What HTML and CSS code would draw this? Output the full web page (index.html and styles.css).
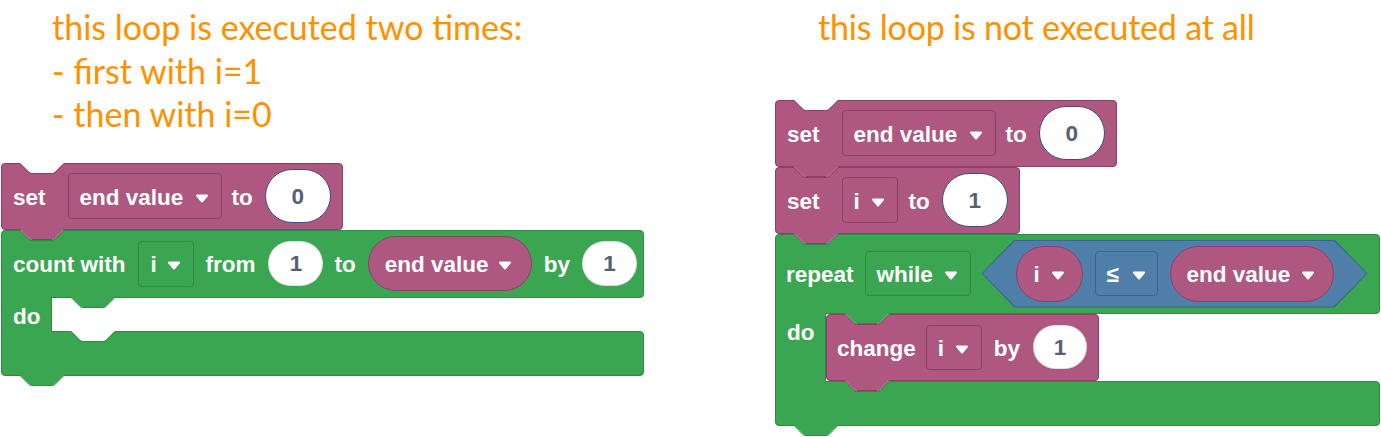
FILE: index.html
```html
<!DOCTYPE html>
<html lang="en">
<head>
<meta charset="utf-8">
<title>Blockly loops</title>
<link rel="stylesheet" href="styles.css">
</head>
<body>
<div class="page">
  <section class="col col-left">
    <p class="note">this loop is executed two times:<br>- first with i=1<br>- then with i=0</p>
    <div class="stack">
      <div class="block purple simple">
        <svg class="notch" viewBox="0 0 44 11"><path class="f" d="M0 0 L9 9 Q10 10 11.5 10 L32.5 10 Q34 10 35 9 L44 0 Z"/><path class="s" d="M0 0.5 L9 9.5 Q10 10.5 11.5 10.5 L32.5 10.5 Q34 10.5 35 9.5 L44 0.5"/></svg>
        <span class="lbl">set</span>
        <span class="dd dd-var ml-22">end value<svg class="arrow" viewBox="0 0 14 9"><path d="M2 1.5 H12 L7 7.5 Z"/></svg></span>
        <span class="lbl ml-10">to</span>
        <span class="num num-lg ml-12">0</span>
        <svg class="tab" viewBox="0 0 44 11"><path class="f" d="M0 0 L9 9 Q10 10 11.5 10 L32.5 10 Q34 10 35 9 L44 0 Z"/><path class="s" d="M0 0.5 L9 9.5 Q10 10.5 11.5 10.5 L32.5 10.5 Q34 10.5 35 9.5 L44 0.5"/></svg>
      </div>

      <div class="cblock green cblock-left">
        <div class="block c-top row-count">
          <svg class="notch" viewBox="0 0 44 11"><path class="f" d="M0 0 L9 9 Q10 10 11.5 10 L32.5 10 Q34 10 35 9 L44 0 Z"/><path class="s" d="M0 0.5 L9 9.5 Q10 10.5 11.5 10.5 L32.5 10.5 Q34 10.5 35 9.5 L44 0.5"/></svg>
          <span class="lbl">count with</span>
          <span class="dd dd-i ml-13">i<svg class="arrow" viewBox="0 0 14 9"><path d="M2 1.5 H12 L7 7.5 Z"/></svg></span>
          <span class="lbl ml-11">from</span>
          <span class="num num-sm ml-13">1</span>
          <span class="lbl ml-11">to</span>
          <span class="pill purple pill-var ml-12">end value<svg class="arrow" viewBox="0 0 14 9"><path d="M2 1.5 H12 L7 7.5 Z"/></svg></span>
          <span class="lbl ml-12">by</span>
          <span class="num num-sm ml-12">1</span>
          <svg class="tab tab-slot" viewBox="0 0 44 11"><path class="f" d="M0 0 L9 9 Q10 10 11.5 10 L32.5 10 Q34 10 35 9 L44 0 Z"/><path class="s" d="M0 0.5 L9 9.5 Q10 10.5 11.5 10.5 L32.5 10.5 Q34 10.5 35 9.5 L44 0.5"/></svg>
        </div>
        <div class="c-mid">
          <div class="spine"><span class="lbl">do</span></div>
          <div class="slot slot-empty"></div>
        </div>
        <div class="block c-bot">
          <svg class="notch notch-slot" viewBox="0 0 44 11"><path class="f" d="M0 0 L9 9 Q10 10 11.5 10 L32.5 10 Q34 10 35 9 L44 0 Z"/><path class="s" d="M0 0.5 L9 9.5 Q10 10.5 11.5 10.5 L32.5 10.5 Q34 10.5 35 9.5 L44 0.5"/></svg>
          <svg class="tab" viewBox="0 0 44 11"><path class="f" d="M0 0 L9 9 Q10 10 11.5 10 L32.5 10 Q34 10 35 9 L44 0 Z"/><path class="s" d="M0 0.5 L9 9.5 Q10 10.5 11.5 10.5 L32.5 10.5 Q34 10.5 35 9.5 L44 0.5"/></svg>
        </div>
      </div>
    </div>
  </section>

  <section class="col col-right">
    <p class="note">this loop is not executed at all</p>
    <div class="stack">
      <div class="block purple simple">
        <svg class="notch" viewBox="0 0 44 11"><path class="f" d="M0 0 L9 9 Q10 10 11.5 10 L32.5 10 Q34 10 35 9 L44 0 Z"/><path class="s" d="M0 0.5 L9 9.5 Q10 10.5 11.5 10.5 L32.5 10.5 Q34 10.5 35 9.5 L44 0.5"/></svg>
        <span class="lbl">set</span>
        <span class="dd dd-var ml-22">end value<svg class="arrow" viewBox="0 0 14 9"><path d="M2 1.5 H12 L7 7.5 Z"/></svg></span>
        <span class="lbl ml-10">to</span>
        <span class="num num-lg ml-12">0</span>
        <svg class="tab" viewBox="0 0 44 11"><path class="f" d="M0 0 L9 9 Q10 10 11.5 10 L32.5 10 Q34 10 35 9 L44 0 Z"/><path class="s" d="M0 0.5 L9 9.5 Q10 10.5 11.5 10.5 L32.5 10.5 Q34 10.5 35 9.5 L44 0.5"/></svg>
      </div>

      <div class="block purple simple">
        <svg class="notch" viewBox="0 0 44 11"><path class="f" d="M0 0 L9 9 Q10 10 11.5 10 L32.5 10 Q34 10 35 9 L44 0 Z"/><path class="s" d="M0 0.5 L9 9.5 Q10 10.5 11.5 10.5 L32.5 10.5 Q34 10.5 35 9.5 L44 0.5"/></svg>
        <span class="lbl">set</span>
        <span class="dd dd-i ml-22">i<svg class="arrow" viewBox="0 0 14 9"><path d="M2 1.5 H12 L7 7.5 Z"/></svg></span>
        <span class="lbl ml-11">to</span>
        <span class="num num-lg ml-12">1</span>
        <svg class="tab" viewBox="0 0 44 11"><path class="f" d="M0 0 L9 9 Q10 10 11.5 10 L32.5 10 Q34 10 35 9 L44 0 Z"/><path class="s" d="M0 0.5 L9 9.5 Q10 10.5 11.5 10.5 L32.5 10.5 Q34 10.5 35 9.5 L44 0.5"/></svg>
      </div>

      <div class="cblock green cblock-right">
        <div class="block c-top row-repeat">
          <svg class="notch" viewBox="0 0 44 11"><path class="f" d="M0 0 L9 9 Q10 10 11.5 10 L32.5 10 Q34 10 35 9 L44 0 Z"/><path class="s" d="M0 0.5 L9 9.5 Q10 10.5 11.5 10.5 L32.5 10.5 Q34 10.5 35 9.5 L44 0.5"/></svg>
          <span class="lbl">repeat</span>
          <span class="dd dd-while ml-11">while<svg class="arrow" viewBox="0 0 14 9"><path d="M2 1.5 H12 L7 7.5 Z"/></svg></span>
          <div class="hex ml-11">
            <span class="pill purple pill-i">i<svg class="arrow" viewBox="0 0 14 9"><path d="M2 1.5 H12 L7 7.5 Z"/></svg></span>
            <span class="dd dd-op ml-12">≤<svg class="arrow" viewBox="0 0 14 9"><path d="M2 1.5 H12 L7 7.5 Z"/></svg></span>
            <span class="pill purple pill-var pill-tall ml-12">end value<svg class="arrow" viewBox="0 0 14 9"><path d="M2 1.5 H12 L7 7.5 Z"/></svg></span>
          </div>
          <svg class="tab tab-slot" viewBox="0 0 44 11"><path class="f" d="M0 0 L9 9 Q10 10 11.5 10 L32.5 10 Q34 10 35 9 L44 0 Z"/><path class="s" d="M0 0.5 L9 9.5 Q10 10.5 11.5 10.5 L32.5 10.5 Q34 10.5 35 9.5 L44 0.5"/></svg>
        </div>
        <div class="c-mid">
          <div class="spine"><span class="lbl">do</span></div>
          <div class="slot">
            <div class="block purple simple change">
              <svg class="notch" viewBox="0 0 44 11"><path class="f" d="M0 0 L9 9 Q10 10 11.5 10 L32.5 10 Q34 10 35 9 L44 0 Z"/><path class="s" d="M0 0.5 L9 9.5 Q10 10.5 11.5 10.5 L32.5 10.5 Q34 10.5 35 9.5 L44 0.5"/></svg>
              <span class="lbl">change</span>
              <span class="dd dd-i dd-short ml-10">i<svg class="arrow" viewBox="0 0 14 9"><path d="M2 1.5 H12 L7 7.5 Z"/></svg></span>
              <span class="lbl ml-12">by</span>
              <span class="num num-sm num-xs ml-13">1</span>
              <svg class="tab" viewBox="0 0 44 11"><path class="f" d="M0 0 L9 9 Q10 10 11.5 10 L32.5 10 Q34 10 35 9 L44 0 Z"/><path class="s" d="M0 0.5 L9 9.5 Q10 10.5 11.5 10.5 L32.5 10.5 Q34 10.5 35 9.5 L44 0.5"/></svg>
            </div>
          </div>
        </div>
        <div class="block c-bot">
          <svg class="notch notch-slot" viewBox="0 0 44 11"><path class="f" d="M0 0 L9 9 Q10 10 11.5 10 L32.5 10 Q34 10 35 9 L44 0 Z"/><path class="s" d="M0 0.5 L9 9.5 Q10 10.5 11.5 10.5 L32.5 10.5 Q34 10.5 35 9.5 L44 0.5"/></svg>
          <svg class="tab" viewBox="0 0 44 11"><path class="f" d="M0 0 L9 9 Q10 10 11.5 10 L32.5 10 Q34 10 35 9 L44 0 Z"/><path class="s" d="M0 0.5 L9 9.5 Q10 10.5 11.5 10.5 L32.5 10.5 Q34 10.5 35 9.5 L44 0.5"/></svg>
        </div>
      </div>
    </div>
  </section>
</div>
</body>
</html>
```

FILE: styles.css
```css
* { box-sizing: border-box; }

body {
  margin: 0;
  background: #ffffff;
  font-family: "Liberation Sans", Arial, sans-serif;
}

.page {
  display: flex;
  width: 1381px;
  height: 437px;
  overflow: hidden;
}

.col-left { flex: none; width: 775px; }
.col-right { flex: 1; }

.note {
  margin: 5px 0 0 0;
  font-family: Lato, "Open Sans", sans-serif;
  font-weight: 400;
  font-size: 34px;
  line-height: 43.5px;
  color: #ff9100;
  white-space: nowrap;
}
.col-left .note { margin-left: 52px; }
.col-right .note { margin-left: 43px; letter-spacing: -0.2px; }

.stack {
  display: flex;
  flex-direction: column;
  align-items: flex-start;
}
.col-left .stack { margin: 27px 0 0 1px; }
.col-right .stack { margin: 51px 0 0 0; }

/* colours */
.purple { --bg: #ad5781; --edge: #8b3f66; }
.green  { --bg: #3ba651; --edge: #2d8a41; }
.hex    { --bg: #4f7ea8; --edge: #3a658d; }

/* generic block */
.block {
  position: relative;
  display: flex;
  align-items: center;
  height: 67px;
  padding: 0 11px;
  background: var(--bg);
  border: 1px solid var(--edge);
  border-radius: 4px;
  color: #ffffff;
  font-weight: bold;
  font-size: 22.5px;
  line-height: 1;
}

.lbl { white-space: nowrap; padding-top: 4px; }

.ml-10 { margin-left: 10px; }
.ml-11 { margin-left: 11px; }
.ml-12 { margin-left: 12px; }
.ml-13 { margin-left: 13px; }
.ml-22 { margin-left: 22px; }

/* notch / tab connectors */
.notch, .tab {
  position: absolute;
  left: 18px;
  width: 44px;
  height: 11px;
  overflow: visible;
}
.notch { top: -1px; z-index: 1; }
.tab { top: 100%; z-index: 2; }
.notch .f { fill: #ffffff; }
.tab .f { fill: var(--bg); }
.notch .s, .tab .s { fill: none; stroke: var(--edge); stroke-width: 1; }

.tab-slot { left: 69px; }
.notch-slot { left: 69px; }

/* dropdown fields */
.dd {
  display: flex;
  align-items: center;
  justify-content: space-between;
  flex: none;
  height: 46px;
  padding: 4px 12px 0 11px;
  border: 1px solid var(--edge);
  border-radius: 4px;
  white-space: nowrap;
}
.dd-var { width: 154px; }
.dd-i { width: 56px; }
.dd-short { height: 45px; }
.dd-while { width: 106px; height: 45px; }
.dd-op { width: 63px; height: 45px; padding-right: 11px; }

.arrow {
  flex: none;
  width: 14px;
  height: 9px;
}
.arrow path {
  fill: #ffffff;
  stroke: #ffffff;
  stroke-width: 2;
  stroke-linejoin: round;
}

/* number ovals */
.num {
  display: flex;
  align-items: center;
  justify-content: center;
  flex: none;
  padding-top: 2px;
  background: #ffffff;
  color: #575e75;
  border-radius: 999px;
}
.num-lg { width: 66px; height: 54px; border: 1px solid #3e4c7c; }
.num-sm { width: 55px; height: 45px; border: 1px solid rgba(0, 0, 0, 0.12); }
.num-xs { width: 54px; height: 44px; }

/* reporter pills */
.pill {
  display: flex;
  align-items: center;
  justify-content: space-between;
  flex: none;
  height: 55px;
  padding: 4px 19px 0 16px;
  background: var(--bg);
  border: 1px solid var(--edge);
  border-radius: 28px;
  white-space: nowrap;
}
.pill-var { width: 164px; }
.pill-tall { height: 56px; padding-right: 18px; }
.pill-i { width: 67px; height: 56px; padding-left: 17px; padding-right: 17px; }

/* boolean hexagon */
.hex {
  position: relative;
  isolation: isolate;
  display: flex;
  align-items: center;
  flex: none;
  width: 386px;
  height: 68px;
  padding: 0 34px;
  background: var(--edge);
  clip-path: polygon(0 50%, 33px 0, calc(100% - 33px) 0, 100% 50%, calc(100% - 33px) 100%, 33px 100%);
}
.hex::before {
  content: "";
  position: absolute;
  inset: 1px;
  z-index: -1;
  background: var(--bg);
  clip-path: polygon(0 50%, 33px 0, calc(100% - 33px) 0, 100% 50%, calc(100% - 33px) 100%, 33px 100%);
}

/* C-shaped loop blocks */
.cblock {
  display: flex;
  flex-direction: column;
}
.cblock-left { width: 643px; }
.cblock-right { width: 605px; }

.c-top {
  border-radius: 4px 4px 4px 0;
}
.row-count { height: 68px; }
.row-repeat { height: 80px; padding-left: 10px; }

.c-mid {
  display: flex;
  margin: -1px 0;
}
.spine {
  position: relative;
  z-index: 1;
  flex: none;
  width: 51px;
  padding: 7px 0 0 11px;
  background: var(--bg);
  border-left: 1px solid var(--edge);
  border-right: 1px solid var(--edge);
  color: #ffffff;
  font-weight: bold;
  font-size: 22.5px;
  line-height: 26px;
}
.slot {
  flex: 1;
  display: flex;
  align-items: flex-start;
  padding: 1px 0;
}
.slot-empty { min-height: 35px; }

.c-bot {
  height: 45px;
  border-radius: 0 4px 4px 4px;
}

.change { padding-left: 10px; }
```
